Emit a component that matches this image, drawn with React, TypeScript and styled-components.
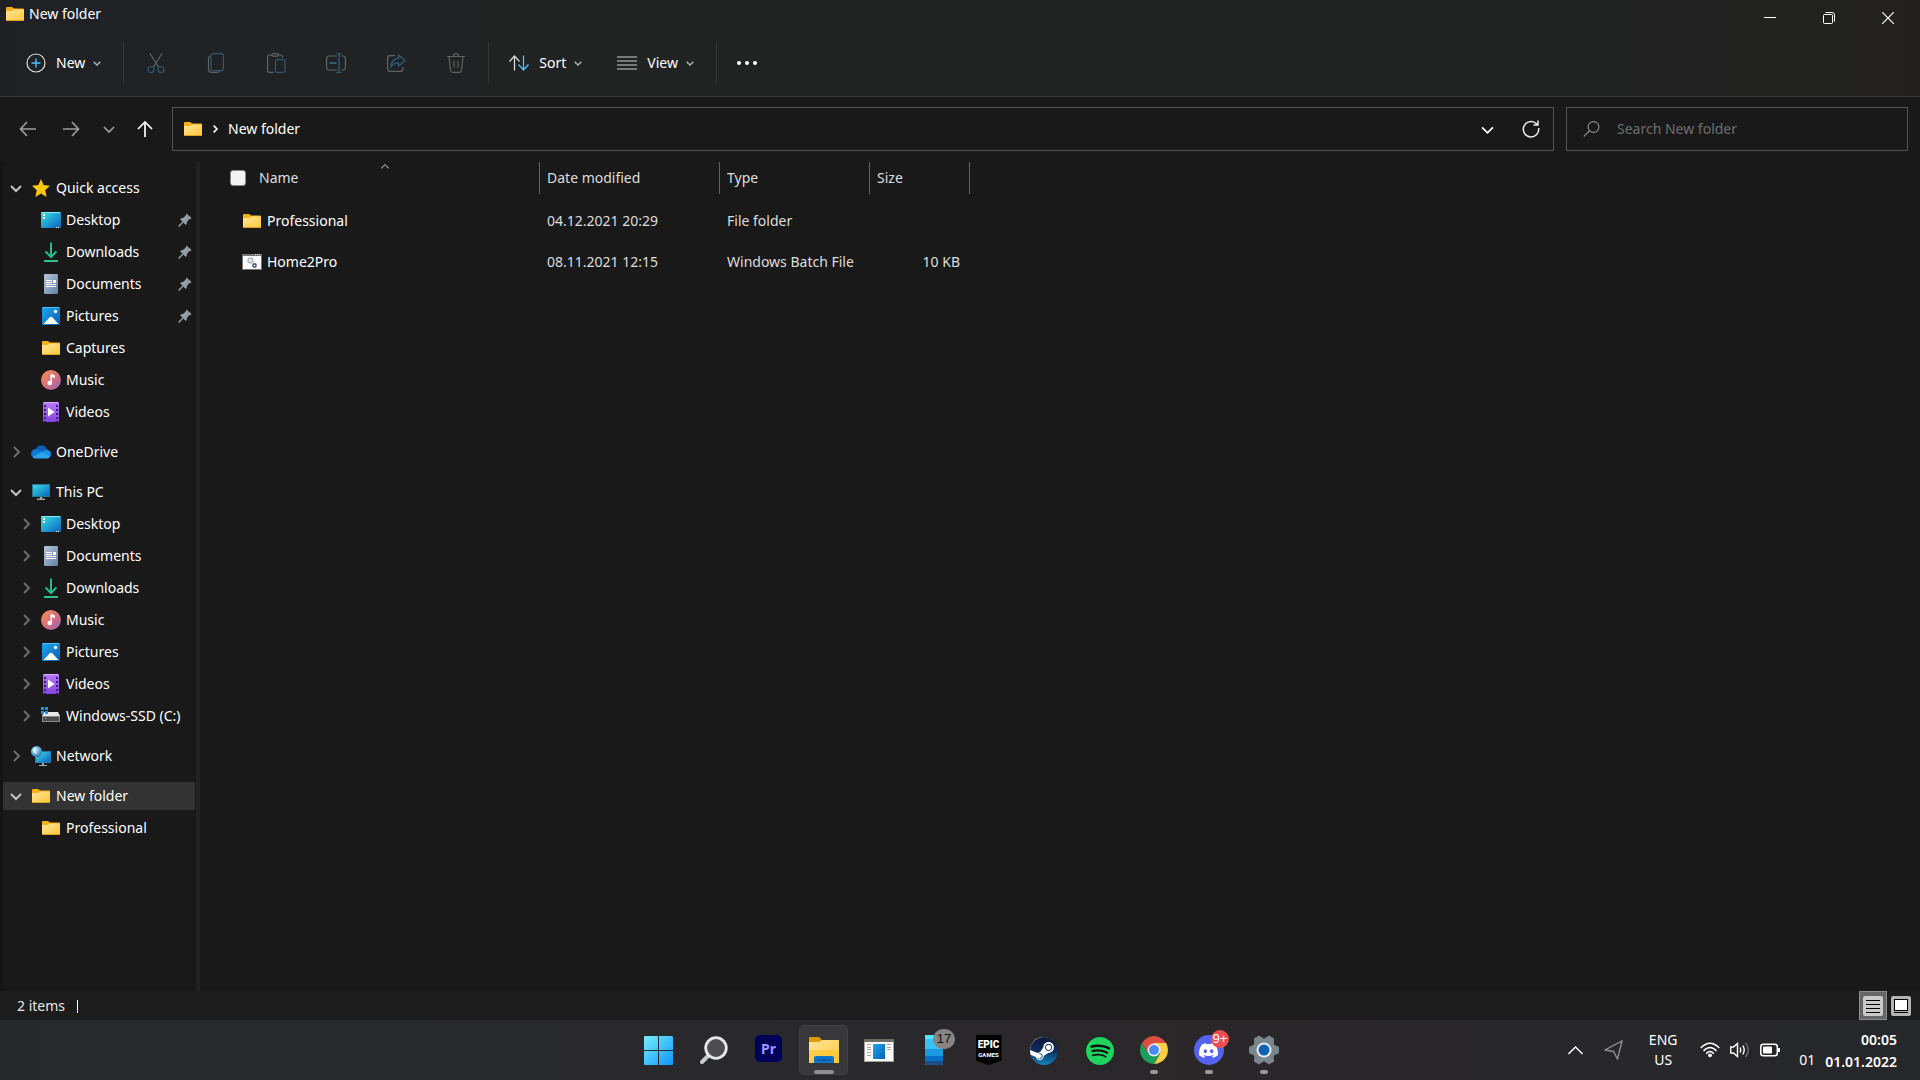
import React from "react";
import styled, { createGlobalStyle, css } from "styled-components";
import { SiDiscord, SiSpotify, SiSteam } from "react-icons/si";

const GlobalStyle = createGlobalStyle`
  *, *::before, *::after { box-sizing: border-box; }
  body {
    margin: 0;
    background: #191919;
    color: #ffffff;
    font-family: "Noto Sans", "Open Sans", sans-serif;
    font-size: 14px;
    line-height: 20px;
  }
  button {
    padding: 0;
    border: 0;
    background: none;
    color: inherit;
    font: inherit;
    cursor: default;
  }
  a { color: inherit; text-decoration: none; cursor: default; }
  ul { margin: 0; padding: 0; list-style: none; }
  svg { display: block; flex: none; }
`;

const Window = styled.div`
  display: flex;
  flex-direction: column;
  min-height: 100vh;
`;

/* ---------- title bar and command bar ---------- */

const Header = styled.header`
  height: 97px;
  border-bottom: 1px solid #3b3b3b;
  background: linear-gradient(90deg, #202125 0%, #202322 30%, #202322 75%, #222120 100%);
`;

const TitleBar = styled.div`
  display: flex;
  justify-content: space-between;
  height: 36px;
`;

const Title = styled.h1`
  display: flex;
  align-items: center;
  gap: 5px;
  height: 28px;
  margin: 0;
  padding-left: 6px;
  font-size: 14px;
  font-weight: 400;
`;

const WindowControls = styled.div`
  display: flex;
  padding-right: 3px;
`;

const WindowButton = styled.button`
  display: grid;
  place-items: center;
  width: 59px;
  height: 36px;
`;

const CommandBar = styled.div`
  display: flex;
  align-items: center;
  height: 54px;
`;

const Group = styled.div<{ $left: number; $right: number; $gap: number }>`
  display: flex;
  align-items: center;
  gap: ${(p) => p.$gap}px;
  padding: 0 ${(p) => p.$right}px 0 ${(p) => p.$left}px;
`;

const CommandButton = styled.button`
  display: flex;
  align-items: center;
  gap: 8px;
  height: 40px;

  span { margin-left: 2px; }
`;

const ToolButton = styled.button`
  display: grid;
  place-items: center;
  width: 40px;
  height: 40px;
`;

const Divider = styled.div`
  width: 1px;
  height: 40px;
  background: #373939;
`;

/* ---------- address row ---------- */

const AddressRow = styled.div`
  display: flex;
  align-items: center;
  height: 65px;
  padding: 0 12px 1px 8px;
`;

const History = styled.div`
  display: flex;
  align-items: center;
  width: 164px;
`;

const HistoryButton = styled.button<{ $width: number }>`
  display: grid;
  place-items: center;
  width: ${(p) => p.$width}px;
  height: 36px;
`;

const fieldBox = css`
  display: flex;
  align-items: center;
  height: 44px;
  border: 1px solid #535353;
`;

const AddressBox = styled.div`
  ${fieldBox}
  flex: 1;
  padding: 0 1px 0 11px;
`;

const Crumbs = styled.nav`
  display: flex;
  flex: 1;
  align-items: center;
  gap: 9px;
`;

const AddressButton = styled.button`
  display: grid;
  place-items: center;
  width: 43px;
  height: 40px;
`;

const SearchBox = styled.label`
  ${fieldBox}
  width: 342px;
  margin-left: 12px;
  gap: 17px;
  padding: 0 16px;
`;

const SearchInput = styled.input`
  flex: 1;
  min-width: 0;
  padding: 0;
  border: 0;
  outline: 0;
  background: transparent;
  color: #ffffff;
  font: inherit;

  &::placeholder { color: #6f6f6f; opacity: 1; }
`;

/* ---------- navigation pane ---------- */

const Body = styled.div`
  display: flex;
  flex: 1;
`;

const NavPane = styled.nav`
  display: flex;
  flex-direction: column;
  gap: 12px;
  width: 200px;
  padding: 12px 1px 0 0;
  border-left: 3px solid #141414;
  border-right: 4px solid #222222;
`;

const TreeGroup = styled.ul`
  display: flex;
  flex-direction: column;
  gap: 4px;
`;

const TreeRow = styled.li<{ $level: number; $selected?: boolean }>`
  display: flex;
  align-items: center;
  height: 28px;
  padding-left: ${(p) => p.$level * 10 + 1}px;
  background: ${(p) => (p.$selected ? "#333333" : "transparent")};
  border-radius: 2px;
`;

const Toggle = styled.button`
  display: grid;
  place-items: center;
  width: 24px;
  height: 28px;
`;

const TreeLink = styled.a`
  display: flex;
  flex: 1;
  align-items: center;
  gap: 5px;
  padding: 0 3px;
  white-space: nowrap;
`;

const IconSlot = styled.span`
  display: grid;
  place-items: center;
  width: 20px;
  height: 20px;
`;

const PinSlot = styled.span`
  margin-left: auto;
`;

/* ---------- file list ---------- */

const FilePane = styled.main`
  flex: 1;
  padding-left: 29px;
`;

const FileTable = styled.table`
  width: 741px;
  border-collapse: collapse;
  table-layout: fixed;
`;

const HeadCell = styled.th<{ $width: number }>`
  position: relative;
  width: ${(p) => p.$width}px;
  height: 38px;
  padding: 0 0 6px;
  font-weight: 400;
  text-align: left;
  color: #dedede;
`;

const HeadLabel = styled.div<{ $indent?: number }>`
  display: flex;
  align-items: center;
  height: 32px;
  gap: 13px;
  padding-left: ${(p) => p.$indent ?? 7}px;
  border-right: 1px solid #636363;
`;

const SortMark = styled.span`
  position: absolute;
  top: 0;
  left: 50%;
  transform: translateX(-50%);
`;

const SelectAll = styled.input`
  appearance: none;
  width: 16px;
  height: 16px;
  margin: 0;
  border: 1px solid #8a8a8a;
  border-radius: 3px;
  background: #f3f3f3;
`;

const Cell = styled.td<{ $right?: boolean }>`
  height: 41px;
  padding: 0 ${(p) => (p.$right ? 10 : 0)}px 0 7px;
  text-align: ${(p) => (p.$right ? "right" : "left")};
  color: #dedede;
  white-space: nowrap;
`;

const FileLink = styled.a`
  display: flex;
  align-items: center;
  gap: 5px;
  padding-left: 6px;
  color: #ffffff;
`;

/* ---------- status bar ---------- */

const StatusBar = styled.footer`
  display: flex;
  align-items: center;
  height: 29px;
  padding: 0 5px 0 17px;
  background: #1c1c1c;
  color: #e6e6e6;
`;

const StatusText = styled.span`
  flex: 1;

  &::after {
    content: "";
    display: inline-block;
    width: 1px;
    height: 13px;
    margin-left: 12px;
    background: #ffffff;
    vertical-align: -2px;
  }
`;

const ViewButton = styled.button<{ $active?: boolean }>`
  display: grid;
  place-items: center;
  width: 28px;
  height: 29px;
  border: 1px solid ${(p) => (p.$active ? "#8c8c8c" : "transparent")};
  background: ${(p) => (p.$active ? "#666666" : "transparent")};
`;

/* ---------- taskbar ---------- */

const Taskbar = styled.div`
  display: grid;
  grid-template-columns: 1fr auto 1fr;
  align-items: center;
  height: 60px;
  background: linear-gradient(90deg, #26282b 0%, #29292d 38%, #2a2729 62%, #26272b 100%);
`;

const Apps = styled.div`
  grid-column: 2;
  display: flex;
  gap: 6px;
  padding-left: 2px;
`;

const AppButton = styled.button<{ $active?: boolean }>`
  position: relative;
  display: grid;
  place-items: center;
  width: 49px;
  height: 50px;
  border: 1px solid ${(p) => (p.$active ? "#414143" : "transparent")};
  border-radius: 5px;
  background: ${(p) => (p.$active ? "#38383b" : "transparent")};
`;

const Running = styled.span<{ $wide?: boolean }>`
  position: absolute;
  bottom: 0;
  left: 50%;
  width: ${(p) => (p.$wide ? 20 : 8)}px;
  height: 4px;
  border-radius: 2px;
  background: ${(p) => (p.$wide ? "#8f8d8c" : "#9b999a")};
  transform: translateX(-50%);
`;

const Badge = styled.span<{ $alert?: boolean }>`
  position: absolute;
  top: ${(p) => (p.$alert ? 4 : 3)}px;
  left: ${(p) => (p.$alert ? 26 : 23)}px;
  display: grid;
  place-items: center;
  width: ${(p) => (p.$alert ? 18 : 22)}px;
  height: ${(p) => (p.$alert ? 18 : 20)}px;
  border-radius: 10px;
  background: ${(p) => (p.$alert ? "#ed4f50" : "#868584")};
  color: ${(p) => (p.$alert ? "#ffffff" : "#111111")};
  font-family: "Liberation Sans", Arial, sans-serif;
  font-size: 13px;
  line-height: 16px;
`;

const PremiereTile = styled.span`
  display: grid;
  place-items: center;
  width: 27px;
  height: 27px;
  margin-bottom: 3px;
  border-radius: 5px;
  background: #00005b;
  color: #9999ff;
  font-size: 14px;
  font-weight: 700;
`;

const EpicShield = styled.span`
  display: flex;
  flex-direction: column;
  align-items: center;
  width: 26px;
  height: 30px;
  padding-top: 3px;
  background: #000000;
  clip-path: polygon(0 0, 100% 0, 100% 85%, 50% 100%, 0 85%);
  color: #ffffff;
  font-family: Roboto, sans-serif;
  font-weight: 700;

  b { font-size: 10px; line-height: 13px; }
  small { font-size: 6px; line-height: 7px; }
`;

const Disc = styled.span<{ $color: string; $size: number }>`
  display: grid;
  place-items: center;
  width: ${(p) => p.$size}px;
  height: ${(p) => p.$size}px;
  border-radius: 50%;
  background: ${(p) => p.$color};
`;

const Tray = styled.div`
  grid-column: 3;
  display: flex;
  align-items: center;
  justify-content: flex-end;
  height: 60px;
  padding-right: 23px;
`;

const TrayButton = styled.button<{ $width: number }>`
  display: grid;
  place-items: center;
  width: ${(p) => p.$width}px;
  height: 48px;
`;

const Language = styled.button`
  width: 60px;
  line-height: 20px;
  text-align: center;
`;

const QuickSettings = styled.button`
  display: flex;
  align-items: center;
  gap: 10px;
  height: 48px;
  padding: 0 18px 0 7px;
`;

const Notices = styled.button`
  align-self: flex-end;
  margin-bottom: 10px;
  padding-right: 10px;
`;

const Clock = styled.button`
  padding-top: 2px;
  font-weight: 600;
  line-height: 22px;
  text-align: right;
`;

/* ---------- drawings ---------- */

type Dir = "down" | "right" | "up";

const chevronPaths: Record<Dir, string> = {
  down: "M1 4 L6 9 L11 4",
  right: "M4 1 L9 6 L4 11",
  up: "M1 8.500 L6 3.500 L11 8.500",
};

function Chevron({ dir, size = 12, color = "#ffffff", stroke = 1.4 }: { dir: Dir; size?: number; color?: string; stroke?: number }) {
  return (
    <svg width={size} height={size} viewBox="0 0 12 12" fill="none" stroke={color} strokeWidth={stroke} aria-hidden="true">
      <path d={chevronPaths[dir]} />
    </svg>
  );
}

const HiddenDefs = styled.svg`
  position: absolute;
`;

function Defs() {
  return (
    <HiddenDefs width="0" height="0" aria-hidden="true">
      <defs>
        <linearGradient id="folder" x1="0" y1="0" x2="1" y2="1">
          <stop offset="0" stopColor="#ffe69c" />
          <stop offset="1" stopColor="#ffc83a" />
        </linearGradient>
        <linearGradient id="screen" x1="0" y1="0" x2="1" y2="1">
          <stop offset="0" stopColor="#3ae0e6" />
          <stop offset="1" stopColor="#0a62c0" />
        </linearGradient>
        <linearGradient id="photo" x1="0" y1="0" x2="1" y2="1">
          <stop offset="0" stopColor="#1fa6ee" />
          <stop offset="1" stopColor="#0560b8" />
        </linearGradient>
        <linearGradient id="music" x1="0" y1="0" x2="1" y2="1">
          <stop offset="0.1" stopColor="#f58a55" />
          <stop offset="0.6" stopColor="#cf6d86" />
          <stop offset="1" stopColor="#8f5fc4" />
        </linearGradient>
        <linearGradient id="doc" x1="0" y1="0" x2="1" y2="1">
          <stop offset="0" stopColor="#b4c6da" />
          <stop offset="1" stopColor="#64809f" />
        </linearGradient>
        <linearGradient id="video" x1="0" y1="0" x2="0" y2="1">
          <stop offset="0" stopColor="#b67bf5" />
          <stop offset="1" stopColor="#8743e3" />
        </linearGradient>
        <linearGradient id="start" x1="0" y1="0" x2="1" y2="1">
          <stop offset="0" stopColor="#76eeff" />
          <stop offset="1" stopColor="#0f94fb" />
        </linearGradient>
        <linearGradient id="steam" x1="0" y1="0" x2="0" y2="1">
          <stop offset="0" stopColor="#12183c" />
          <stop offset="0.5" stopColor="#0c2c5b" />
          <stop offset="1" stopColor="#1284bd" />
        </linearGradient>
        <radialGradient id="globe" cx="0.4" cy="0.35" r="0.7">
          <stop offset="0" stopColor="#d6f0fb" />
          <stop offset="0.6" stopColor="#5aa5cf" />
          <stop offset="1" stopColor="#2b6d9a" />
        </radialGradient>
      </defs>
    </HiddenDefs>
  );
}

const FolderIcon = () => (
  <svg width="18" height="14" viewBox="0 0 18 14" aria-hidden="true">
    <path d="M0 1 Q0 0 1 0 H6 L8 1.500 H17 Q18 1.500 18 2.500 V6 H0 Z" fill="#f9b015" />
    <path d="M0 4 H6 L8 2.500 H18 V13 H0 Z" fill="url(#folder)" />
    <path d="M0 13 H18 V13.500 Q18 14 17 14 H1 Q0 14 0 13.500 Z" fill="#e0a01f" />
  </svg>
);

const DesktopIcon = () => (
  <svg width="20" height="16" viewBox="0 0 20 16" aria-hidden="true">
    <rect width="20" height="16" rx="1" fill="url(#screen)" />
    <path d="M1 0.500 H19" stroke="#8cecf5" />
    <path d="M2 2 h2 v2 h-2 Z M2 5 h2 v2 h-2 Z M15 15 h1 v1 h-1 Z M17 15 h1 v1 h-1 Z" fill="#ffffff" />
  </svg>
);

const DownloadsIcon = () => (
  <svg width="14" height="20" viewBox="0 0 14 20" fill="none" aria-hidden="true">
    <path d="M7 0.500 V15 M1.500 9.500 L7 15 L12.500 9.500" stroke="#22bb8f" strokeWidth="2" />
    <path d="M0 19 H14" stroke="#2cc58a" strokeWidth="2" />
  </svg>
);

const DocumentsIcon = () => (
  <svg width="14" height="20" viewBox="0 0 14 20" aria-hidden="true">
    <rect width="14" height="20" rx="1" fill="url(#doc)" />
    <path d="M2 6.500 H8 M2 8.500 H8 M2 10.500 H12 M2 12.500 H12" stroke="#ffffff" />
    <rect x="9" y="6" width="3" height="3" fill="#ffffff" />
  </svg>
);

const PicturesIcon = () => (
  <svg width="18" height="18" viewBox="0 0 18 18" aria-hidden="true">
    <rect width="18" height="18" rx="1" fill="url(#photo)" />
    <path d="M1 0.500 H17" stroke="#56c0f4" />
    <path d="M1.500 17 L7.500 10.500 Q9 9 10.500 10.500 L16.500 17 Z" fill="#ffffff" />
    <circle cx="13.500" cy="4.500" r="1.700" fill="#ffffff" />
  </svg>
);

const MusicIcon = () => (
  <svg width="20" height="20" viewBox="0 0 20 20" aria-hidden="true">
    <circle cx="10" cy="10" r="10" fill="url(#music)" />
    <circle cx="8.700" cy="13" r="2.300" fill="#ffffff" />
    <path d="M9.500 4 H10.500 L14 5.500 V8.300 L11 7 V13 H9.500 Z" fill="#ffffff" />
  </svg>
);

const VideosIcon = () => (
  <svg width="16" height="20" viewBox="0 0 16 20" aria-hidden="true">
    <rect width="16" height="20" rx="1" fill="url(#video)" />
    <path d="M1 0.500 H15" stroke="#d3b0fa" />
    <path d="M2 3 V20 M14 3 V20" stroke="#3c1b70" strokeWidth="2" strokeDasharray="2 2" />
    <path d="M5 5.500 L11.500 10 L5 14.500 Z" fill="#ffffff" />
  </svg>
);

const StarIcon = () => (
  <svg width="18" height="18" viewBox="0 0 18 18" aria-hidden="true">
    <path d="M9 0 L11.600 6 L18 6.800 L13.200 11.200 L14.600 18 L9 14.600 L3.400 18 L4.800 11.200 L0 6.800 L6.400 6 Z" fill="#fcc70c" />
  </svg>
);

const OneDriveIcon = () => (
  <svg width="20" height="14" viewBox="0 0 20 14" aria-hidden="true">
    <path d="M4.500 5 Q6 0.300 10.500 0.300 Q15 0.500 16 5 L10 8 Z" fill="#0a60b8" />
    <path d="M1 11.500 Q-0.700 9 0.700 6.500 Q2.500 3.500 6 4.200 L14 8 L5 12 Z" fill="#0c78d4" />
    <path d="M11 7 L15 4.800 Q19.500 4.800 20 9 Q20 12 18 12.800 Z" fill="#1592e4" />
    <path d="M1.300 12 L11 6.800 L19 11.800 Q18 13.500 16.500 13.500 H4.500 Q2.500 13.500 1.300 12 Z" fill="#29a7ea" />
  </svg>
);

const PcIcon = () => (
  <svg width="18" height="16" viewBox="0 0 18 16" aria-hidden="true">
    <rect x="0.500" y="0.500" width="17" height="12" fill="url(#screen)" stroke="#27788e" />
    <path d="M8 13 H10 V14.500 H13 V16 H5 V14.500 H8 Z" fill="#9aa6ae" />
  </svg>
);

const DriveIcon = () => (
  <svg width="20" height="20" viewBox="0 0 20 20" aria-hidden="true">
    <path d="M3 6 H17 L19 10 H1 Z" fill="#e8e8e8" />
    <rect x="1" y="10" width="18" height="6" fill="#8c8c8c" />
    <rect x="2" y="11" width="16" height="4" fill="#4c4c4c" />
    <rect x="4" y="12" width="1" height="1" fill="#45e04f" />
    <path d="M0 1 h3 v3 h-3 Z M4 1 h3 v3 h-3 Z M0 5 h3 v3 h-3 Z M4 5 h3 v3 h-3 Z" fill="#1b95e6" />
  </svg>
);

const NetworkIcon = () => (
  <svg width="20" height="20" viewBox="0 0 20 20" aria-hidden="true">
    <rect x="4.500" y="5.500" width="15" height="11" fill="url(#screen)" stroke="#1c7fae" />
    <path d="M11 17 h2 v2 h3 v1 h-8 v-1 h3 Z" fill="#a5adb3" />
    <circle cx="5.500" cy="5.500" r="5.500" fill="url(#globe)" />
    <path d="M2 4 Q3 2 5 2 L4 5 L6 8 L3 7 Z" fill="#ffffff" opacity="0.800" />
  </svg>
);

const PinIcon = () => (
  <svg width="14" height="14" viewBox="0 0 14 14" aria-hidden="true">
    <path d="M8.500 0.500 L13.500 5 L12 6.200 L11 6.200 L9 9 L8.600 11.200 L7.500 11.800 L2.200 6.500 L3 5.300 L5.300 4.800 L7.700 2.500 Z" fill="#929ba3" />
    <path d="M5 9 L0.500 13.500" stroke="#929ba3" strokeWidth="1.400" />
  </svg>
);

const BatchIcon = () => (
  <svg width="20" height="16" viewBox="0 0 20 16" aria-hidden="true">
    <rect x="0.500" y="0.500" width="19" height="15" fill="#fbfbfb" stroke="#747474" />
    <path d="M0 1 H20" stroke="#747474" strokeWidth="2" />
    <path d="M13 0.500 H19" stroke="#e8e8e8" strokeDasharray="1 1" />
    <circle cx="8.500" cy="6.500" r="2.300" fill="none" stroke="#a4b0ba" strokeWidth="2" strokeDasharray="1.500 0.300" />
    <circle cx="12.500" cy="11.500" r="1.600" fill="none" stroke="#56626c" strokeWidth="1.600" />
  </svg>
);

const tint = "#2d5a76";
const dim = "#616363";

const NewIcon = () => (
  <svg width="20" height="20" viewBox="0 0 20 20" fill="none" aria-hidden="true">
    <circle cx="10" cy="10" r="9" stroke="#dcdcdc" strokeWidth="1.200" />
    <path d="M10 5.500 V14.500 M5.500 10 H14.500" stroke="#4cc2ff" strokeWidth="1.400" />
  </svg>
);

const CutIcon = () => (
  <svg width="20" height="20" viewBox="0 0 20 20" fill="none" strokeWidth="1.200" aria-hidden="true">
    <path d="M4 0.500 L12.500 14 M16 0.500 L7.500 14" stroke={dim} />
    <circle cx="5" cy="16.500" r="3" stroke={tint} />
    <circle cx="15" cy="16.500" r="3" stroke={tint} />
  </svg>
);

const CopyIcon = () => (
  <svg width="20" height="20" viewBox="0 0 20 20" fill="none" strokeWidth="1.200" aria-hidden="true">
    <path d="M4.500 3 Q2.500 3.500 2.500 5.500 V16 Q2.500 19.400 6 19.400 H11 Q13 19.400 13.700 17.600" stroke={dim} />
    <rect x="5" y="0.600" width="12.400" height="17" rx="2" stroke={tint} />
  </svg>
);

const PasteIcon = () => (
  <svg width="20" height="20" viewBox="0 0 20 20" fill="none" strokeWidth="1.200" aria-hidden="true">
    <path d="M6 2 H3.500 Q1.600 2 1.600 4 V17.500 Q1.600 19.400 3.500 19.400 H7.500 M12 2 H14.500 Q16.500 2 16.500 4 V5" stroke={dim} />
    <rect x="6" y="0.600" width="6.500" height="2.600" rx="1.300" stroke={dim} />
    <rect x="9.500" y="6.600" width="9.500" height="12.800" rx="1.500" stroke={tint} />
  </svg>
);

const RenameIcon = () => (
  <svg width="20" height="20" viewBox="0 0 20 20" fill="none" strokeWidth="1.200" aria-hidden="true">
    <path d="M11 3 H3 Q0.600 3 0.600 5.500 V14.500 Q0.600 17 3 17 H11 M15.500 3 H17 Q19.400 3 19.400 5.500 V14.500 Q19.400 17 17 17 H15.500" stroke={dim} />
    <path d="M13 0.600 V19.400 M10.500 0.600 H15.500 M10.500 19.400 H15.500" stroke={tint} strokeWidth="1.400" />
    <path d="M3.500 10 H10.500" stroke={tint} strokeWidth="2" />
  </svg>
);

const ShareIcon = () => (
  <svg width="20" height="20" viewBox="0 0 20 20" fill="none" strokeWidth="1.200" aria-hidden="true">
    <path d="M9 2.600 H4 Q1.600 2.600 1.600 5 V16 Q1.600 18.400 4 18.400 H14.500 Q17 18.400 17 16 V14" stroke={dim} />
    <path d="M12.500 2 L19 7.500 L12.500 13 V10 Q8 9.500 5 13.500 Q5.500 6 12.500 5.200 Z" stroke={tint} strokeWidth="1.400" />
  </svg>
);

const DeleteIcon = () => (
  <svg width="20" height="20" viewBox="0 0 20 20" fill="none" stroke={dim} strokeWidth="1.200" aria-hidden="true">
    <path d="M1 3.500 H19 M7 3.500 Q7.500 0.600 10 0.600 Q12.500 0.600 13 3.500 M3 3.500 L4.500 17.500 Q4.800 19.400 6.500 19.400 H13.500 Q15.200 19.400 15.500 17.500 L17 3.500 M8 7.500 V14.500 M12 7.500 V14.500" />
  </svg>
);

const SortIcon = () => (
  <svg width="20" height="16" viewBox="0 0 20 16" fill="none" strokeWidth="1.300" aria-hidden="true">
    <path d="M5.500 15.500 V1 M0.500 6.500 L5.500 1 L10.500 6.500" stroke="#d8d8d8" />
    <path d="M14.500 0.500 V15 M9.500 9.500 L14.500 15 L19.500 9.500" stroke="#4cc2ff" />
  </svg>
);

const ViewIcon = () => (
  <svg width="20" height="14" viewBox="0 0 20 14" aria-hidden="true">
    <path d="M0 1 H20 M0 5 H20 M0 9 H20 M0 13 H20" stroke="#d0d2d1" strokeWidth="1.200" />
  </svg>
);

const DotsIcon = () => (
  <svg width="22" height="4" viewBox="0 0 22 4" fill="#ffffff" aria-hidden="true">
    <circle cx="3" cy="2" r="2" />
    <circle cx="11" cy="2" r="2" />
    <circle cx="19" cy="2" r="2" />
  </svg>
);

const arrows = {
  back: "M17 8 H1.500 M8 1 L1.500 8 L8 15",
  forward: "M0 8 H15.500 M9 1 L15.500 8 L9 15",
  up: "M8 16 V1 M1 8 L8 1 L15 8",
};

const Arrow = ({ to, color }: { to: keyof typeof arrows; color: string }) => (
  <svg width="17" height="16" viewBox="0 0 17 16" fill="none" stroke={color} strokeWidth="1.700" aria-hidden="true">
    <path d={arrows[to]} />
  </svg>
);

const RefreshIcon = () => (
  <svg width="18" height="18" viewBox="0 0 18 18" fill="none" stroke="#f0f0f0" strokeWidth="1.500" aria-hidden="true">
    <path d="M16.600 8 A7.700 7.700 0 1 1 13.500 3 L16 4.800 M16 0.500 V5 H11.500" />
  </svg>
);

const SearchIcon = () => (
  <svg width="17" height="16" viewBox="0 0 17 16" fill="none" stroke="#8a8a8a" strokeWidth="1.200" aria-hidden="true">
    <circle cx="10.500" cy="6" r="5.400" />
    <path d="M6.700 9.800 L0.700 15.500" />
  </svg>
);

const MinimizeIcon = () => (
  <svg width="12" height="12" viewBox="0 0 12 12" aria-hidden="true"><path d="M0 5.500 H12" stroke="#ffffff" /></svg>
);

const RestoreIcon = () => (
  <svg width="12" height="12" viewBox="0 0 12 12" fill="none" stroke="#ffffff" aria-hidden="true">
    <rect x="0.500" y="2.500" width="9" height="9" rx="1" />
    <path d="M2.500 0.500 H9 Q11.500 0.500 11.500 3 V9.500" />
  </svg>
);

const CloseIcon = () => (
  <svg width="12" height="12" viewBox="0 0 12 12" stroke="#ffffff" strokeWidth="1.200" aria-hidden="true"><path d="M0 0 L12 12 M12 0 L0 12" /></svg>
);

const DetailsViewIcon = () => (
  <svg width="20" height="20" viewBox="0 0 20 20" aria-hidden="true">
    <rect width="20" height="20" rx="2" fill="#c9c9c9" />
    <path d="M3 4.500 H17 M3 8.500 H17 M3 12.500 H17 M3 16.500 H17" stroke="#000000" />
  </svg>
);

const LargeViewIcon = () => (
  <svg width="20" height="20" viewBox="0 0 20 20" aria-hidden="true">
    <rect width="20" height="20" rx="2" fill="#b4b4b4" />
    <rect x="3.500" y="3.500" width="13" height="11" fill="#ffffff" stroke="#000000" />
    <path d="M3 16.500 H17" stroke="#000000" />
  </svg>
);

const StartIcon = () => (
  <svg width="29" height="29" viewBox="0 0 29 29" aria-hidden="true">
    <path d="M1 0 H14 V14 H0 V1 Q0 0 1 0 Z M15 0 H28 Q29 0 29 1 V14 H15 Z M0 15 H14 V29 H1 Q0 29 0 28 Z M15 15 H29 V28 Q29 29 28 29 H15 Z" fill="url(#start)" />
  </svg>
);

const TaskSearchIcon = () => (
  <svg width="28" height="28" viewBox="0 0 28 28" aria-hidden="true">
    <path d="M9.500 18.500 L2 26" stroke="#c9cacc" strokeWidth="4" strokeLinecap="round" />
    <circle cx="16" cy="12" r="10.300" fill="#4d4d50" stroke="#e6e7e9" strokeWidth="2.800" />
  </svg>
);

const ExplorerIcon = () => (
  <svg width="30" height="28" viewBox="0 0 30 28" aria-hidden="true">
    <path d="M0 2 Q0 1 1 1 H10 L13 4 H29 Q30 4 30 5 V12 H0 Z" fill="#dd9b06" />
    <path d="M0 6 H10 L13 4 H30 V27 H0 Z" fill="url(#folder)" />
    <path d="M0 14 H30 V27 H0 Z" fill="#fcc52d" opacity="0.600" />
    <path d="M5 27 V22 Q5 20 7 20 H23 Q25 20 25 22 V27 Z" fill="#1173c6" />
    <path d="M8 24 H22" stroke="#084b8d" />
  </svg>
);

const RunWindowIcon = () => (
  <svg width="30" height="23" viewBox="0 0 30 23" aria-hidden="true">
    <rect x="0.500" y="0.500" width="29" height="22" fill="#fafafa" stroke="#a5a29e" />
    <rect width="30" height="3" fill="#6e6a65" />
    <rect x="9" y="5" width="12" height="15" fill="url(#photo)" />
    <path d="M3 5.500 H7 M3 8.500 H7 M3 10.500 H7 M3 13.500 H7 M3 16.500 H7 M23 5.500 H27 M23 8.500 H27 M23 10.500 H27" stroke="#a9a9a9" />
  </svg>
);

const PhoneIcon = () => (
  <svg width="18" height="30" viewBox="0 0 18 30" aria-hidden="true">
    <rect width="18" height="30" rx="1" fill="#38c3f2" />
    <path d="M0 0 H18 V4 H0 Z" fill="#53e4fb" />
    <path d="M0 14 H18 V21 H0 Z" fill="#1b9ce2" />
    <path d="M0 21 H18 V26 H0 Z" fill="#066fc6" />
    <path d="M0 26 H18 V29 Q18 30 17 30 H1 Q0 30 0 29 Z" fill="#1c4f87" />
  </svg>
);

const ChromeIcon = () => (
  <svg width="28" height="28" viewBox="-14 -14 28 28" aria-hidden="true">
    <path d="M-12.120 -7 A14 14 0 0 1 12.120 -7 L0 -7 L0 0 L-6.060 3.500 Z" fill="#dc4d41" />
    <path d="M12.120 -7 A14 14 0 0 1 0 14 L6.060 3.500 L0 0 L0 -7 Z" fill="#fccd48" />
    <path d="M0 14 A14 14 0 0 1 -12.120 -7 L-6.060 3.500 L0 0 L6.060 3.500 Z" fill="#1c9f5b" />
    <circle r="6.500" fill="#f1f1f1" />
    <circle r="5" fill="#4a8af4" />
  </svg>
);

const SettingsIcon = () => (
  <svg width="30" height="30" viewBox="-15 -15 30 30" aria-hidden="true">
    <g fill="#7a868e">
      {[0, 60, 120].map((angle) => (
        <path key={angle} d="M-15 -3 L-9 -6 H9 L15 -3 V3 L9 6 H-9 L-15 3 Z" transform={`rotate(${angle})`} />
      ))}
      <circle r="11" />
    </g>
    <circle r="7.500" fill="#ececec" />
    <circle r="5.500" fill="#0c62b5" />
  </svg>
);

const LocationIcon = () => (
  <svg width="20" height="20" viewBox="0 0 20 20" fill="none" stroke="#8e8f91" strokeWidth="1.400" aria-hidden="true">
    <path d="M18 1 L13.500 19 L9.500 11.500 L1 10 Z" />
  </svg>
);

const WifiIcon = () => (
  <svg width="20" height="16" viewBox="0 0 20 16" fill="none" stroke="#ffffff" strokeWidth="1.500" aria-hidden="true">
    <path d="M0.700 6 Q10 -3.500 19.300 6 M3.500 9 Q10 2 16.500 9 M6.200 11.700 Q10 7.500 13.800 11.700" />
    <circle cx="10" cy="13.300" r="1.900" fill="#ffffff" stroke="none" />
  </svg>
);

const SpeakerIcon = () => (
  <svg width="20" height="16" viewBox="0 0 20 16" fill="none" stroke="#ffffff" strokeWidth="1.400" aria-hidden="true">
    <path d="M0.700 5 H3.500 L7.500 1.500 V14.500 L3.500 11 H0.700 Z M10 5.500 Q11.500 8 10 10.500 M12.800 3.500 Q15.600 8 12.800 12.500" />
    <path d="M15.500 1 Q21 8 15.500 15" stroke="#6b6c6e" />
  </svg>
);

const BatteryIcon = () => (
  <svg width="21" height="14" viewBox="0 0 21 14" fill="none" aria-hidden="true">
    <rect x="0.800" y="1.300" width="16.500" height="11.400" rx="2.500" stroke="#ffffff" strokeWidth="1.500" />
    <rect x="3" y="3.500" width="9" height="7" rx="1" fill="#ffffff" />
    <path d="M19 5 V9" stroke="#ffffff" strokeWidth="2" />
  </svg>
);

/* ---------- data ---------- */

type Node = {
  label: string;
  icon: React.ReactNode;
  level: number;
  open?: boolean;
  expandable?: boolean;
  pinned?: boolean;
  selected?: boolean;
};

const tree: Node[][] = [
  [
    { label: "Quick access", icon: <StarIcon />, level: 0, expandable: true, open: true },
    { label: "Desktop", icon: <DesktopIcon />, level: 1, pinned: true },
    { label: "Downloads", icon: <DownloadsIcon />, level: 1, pinned: true },
    { label: "Documents", icon: <DocumentsIcon />, level: 1, pinned: true },
    { label: "Pictures", icon: <PicturesIcon />, level: 1, pinned: true },
    { label: "Captures", icon: <FolderIcon />, level: 1 },
    { label: "Music", icon: <MusicIcon />, level: 1 },
    { label: "Videos", icon: <VideosIcon />, level: 1 },
  ],
  [{ label: "OneDrive", icon: <OneDriveIcon />, level: 0, expandable: true }],
  [
    { label: "This PC", icon: <PcIcon />, level: 0, expandable: true, open: true },
    { label: "Desktop", icon: <DesktopIcon />, level: 1, expandable: true },
    { label: "Documents", icon: <DocumentsIcon />, level: 1, expandable: true },
    { label: "Downloads", icon: <DownloadsIcon />, level: 1, expandable: true },
    { label: "Music", icon: <MusicIcon />, level: 1, expandable: true },
    { label: "Pictures", icon: <PicturesIcon />, level: 1, expandable: true },
    { label: "Videos", icon: <VideosIcon />, level: 1, expandable: true },
    { label: "Windows-SSD (C:)", icon: <DriveIcon />, level: 1, expandable: true },
  ],
  [{ label: "Network", icon: <NetworkIcon />, level: 0, expandable: true }],
  [
    { label: "New folder", icon: <FolderIcon />, level: 0, expandable: true, open: true, selected: true },
    { label: "Professional", icon: <FolderIcon />, level: 1 },
  ],
];

const tools = [
  { label: "Cut", icon: <CutIcon /> },
  { label: "Copy", icon: <CopyIcon /> },
  { label: "Paste", icon: <PasteIcon /> },
  { label: "Rename", icon: <RenameIcon /> },
  { label: "Share", icon: <ShareIcon /> },
  { label: "Delete", icon: <DeleteIcon /> },
];

const files = [
  { name: "Professional", icon: <FolderIcon />, date: "04.12.2021 20:29", type: "File folder", size: "" },
  { name: "Home2Pro", icon: <BatchIcon />, date: "08.11.2021 12:15", type: "Windows Batch File", size: "10 KB" },
];

const apps = [
  { label: "Start", icon: <StartIcon /> },
  { label: "Search", icon: <TaskSearchIcon /> },
  { label: "Premiere Pro", icon: <PremiereTile>Pr</PremiereTile> },
  { label: "File Explorer", icon: <ExplorerIcon />, active: true, running: true },
  { label: "Run", icon: <RunWindowIcon /> },
  { label: "Your Phone", icon: <PhoneIcon />, badge: "17" },
  { label: "Epic Games", icon: <EpicShield><b>EPIC</b><small>GAMES</small></EpicShield> },
  { label: "Steam", icon: <Disc $color="#ffffff" $size={27}><SiSteam size={28} fill="url(#steam)" /></Disc> },
  { label: "Spotify", icon: <Disc $color="#111111" $size={26}><SiSpotify size={28} color="#1ed35e" /></Disc> },
  { label: "Chrome", icon: <ChromeIcon />, running: true },
  { label: "Discord", icon: <Disc $color="#5562ee" $size={30}><SiDiscord size={19} color="#ffffff" /></Disc>, running: true, badge: "9+", alert: true },
  { label: "Settings", icon: <SettingsIcon />, running: true },
];

function TreeItem({ node }: { node: Node }) {
  return (
    <TreeRow $level={node.level} $selected={node.selected}>
      <Toggle aria-label={`Toggle ${node.label}`} disabled={!node.expandable}>
        {node.expandable && (
          <Chevron dir={node.open ? "down" : "right"} color={node.open ? "#c4c4c4" : "#6c6c6c"} stroke={2} />
        )}
      </Toggle>
      <TreeLink href="#">
        <IconSlot>{node.icon}</IconSlot>
        {node.label}
        {node.pinned && <PinSlot><PinIcon /></PinSlot>}
      </TreeLink>
    </TreeRow>
  );
}

const MenuMark = () => <Chevron dir="down" size={8} color="#b4b4b4" stroke={2} />;

export default function App() {
  return (
    <Window>
      <GlobalStyle />
      <Defs />
      <Header>
        <TitleBar>
          <Title><FolderIcon />New folder</Title>
          <WindowControls>
            <WindowButton aria-label="Minimize"><MinimizeIcon /></WindowButton>
            <WindowButton aria-label="Restore"><RestoreIcon /></WindowButton>
            <WindowButton aria-label="Close"><CloseIcon /></WindowButton>
          </WindowControls>
        </TitleBar>
        <CommandBar>
          <Group $left={26} $right={22} $gap={0}>
            <CommandButton><NewIcon /><span>New</span><MenuMark /></CommandButton>
          </Group>
          <Divider />
          <Group $left={12} $right={12} $gap={20}>
            {tools.map((tool) => (
              <ToolButton key={tool.label} aria-label={tool.label}>{tool.icon}</ToolButton>
            ))}
          </Group>
          <Divider />
          <Group $left={20} $right={22} $gap={35}>
            <CommandButton><SortIcon /><span>Sort</span><MenuMark /></CommandButton>
            <CommandButton><ViewIcon /><span>View</span><MenuMark /></CommandButton>
          </Group>
          <Divider />
          <Group $left={10} $right={10} $gap={0}>
            <ToolButton aria-label="See more"><DotsIcon /></ToolButton>
          </Group>
        </CommandBar>
      </Header>

      <AddressRow>
        <History>
          <HistoryButton $width={38} aria-label="Back"><Arrow to="back" color="#9d9d9d" /></HistoryButton>
          <HistoryButton $width={50} aria-label="Forward"><Arrow to="forward" color="#9d9d9d" /></HistoryButton>
          <HistoryButton $width={26} aria-label="Recent locations"><Chevron dir="down" color="#9d9d9d" stroke={1.7} /></HistoryButton>
          <HistoryButton $width={46} aria-label="Up"><Arrow to="up" color="#ffffff" /></HistoryButton>
        </History>
        <AddressBox>
          <Crumbs aria-label="Address">
            <FolderIcon />
            <Chevron dir="right" size={8} stroke={2.4} />
            <a href="#">New folder</a>
          </Crumbs>
          <AddressButton aria-label="Previous locations"><Chevron dir="down" size={13} stroke={1.6} /></AddressButton>
          <AddressButton aria-label="Refresh"><RefreshIcon /></AddressButton>
        </AddressBox>
        <SearchBox>
          <SearchIcon />
          <SearchInput type="search" placeholder="Search New folder" aria-label="Search New folder" />
        </SearchBox>
      </AddressRow>

      <Body>
        <NavPane aria-label="Folders">
          {tree.map((group, i) => (
            <TreeGroup key={i}>
              {group.map((node) => <TreeItem key={node.label} node={node} />)}
            </TreeGroup>
          ))}
        </NavPane>
        <FilePane>
          <FileTable>
            <thead>
              <tr>
                <HeadCell $width={311}>
                  <HeadLabel $indent={1}>
                    <SelectAll type="checkbox" aria-label="Select all" />
                    Name
                  </HeadLabel>
                  <SortMark><Chevron dir="up" size={9} color="#a0a0a0" stroke={1.4} /></SortMark>
                </HeadCell>
                <HeadCell $width={180}><HeadLabel>Date modified</HeadLabel></HeadCell>
                <HeadCell $width={150}><HeadLabel>Type</HeadLabel></HeadCell>
                <HeadCell $width={100}><HeadLabel>Size</HeadLabel></HeadCell>
              </tr>
            </thead>
            <tbody>
              {files.map((file) => (
                <tr key={file.name}>
                  <Cell>
                    <FileLink href="#"><IconSlot>{file.icon}</IconSlot>{file.name}</FileLink>
                  </Cell>
                  <Cell>{file.date}</Cell>
                  <Cell>{file.type}</Cell>
                  <Cell $right>{file.size}</Cell>
                </tr>
              ))}
            </tbody>
          </FileTable>
        </FilePane>
      </Body>

      <StatusBar>
        <StatusText>2 items</StatusText>
        <ViewButton $active aria-label="Details view"><DetailsViewIcon /></ViewButton>
        <ViewButton aria-label="Large thumbnails"><LargeViewIcon /></ViewButton>
      </StatusBar>

      <Taskbar>
        <Apps>
          {apps.map((app) => (
            <AppButton key={app.label} $active={app.active} aria-label={app.label}>
              {app.icon}
              {app.badge && <Badge $alert={app.alert}>{app.badge}</Badge>}
              {app.running && <Running $wide={app.active} />}
            </AppButton>
          ))}
        </Apps>
        <Tray>
          <TrayButton $width={40} aria-label="Show hidden icons"><Chevron dir="up" size={17} stroke={1} /></TrayButton>
          <TrayButton $width={38} aria-label="Location"><LocationIcon /></TrayButton>
          <Language>ENG<br />US</Language>
          <QuickSettings aria-label="Network, volume, battery">
            <WifiIcon />
            <SpeakerIcon />
            <BatteryIcon />
          </QuickSettings>
          <Notices>01</Notices>
          <Clock>00:05<br />01.01.2022</Clock>
        </Tray>
      </Taskbar>
    </Window>
  );
}
